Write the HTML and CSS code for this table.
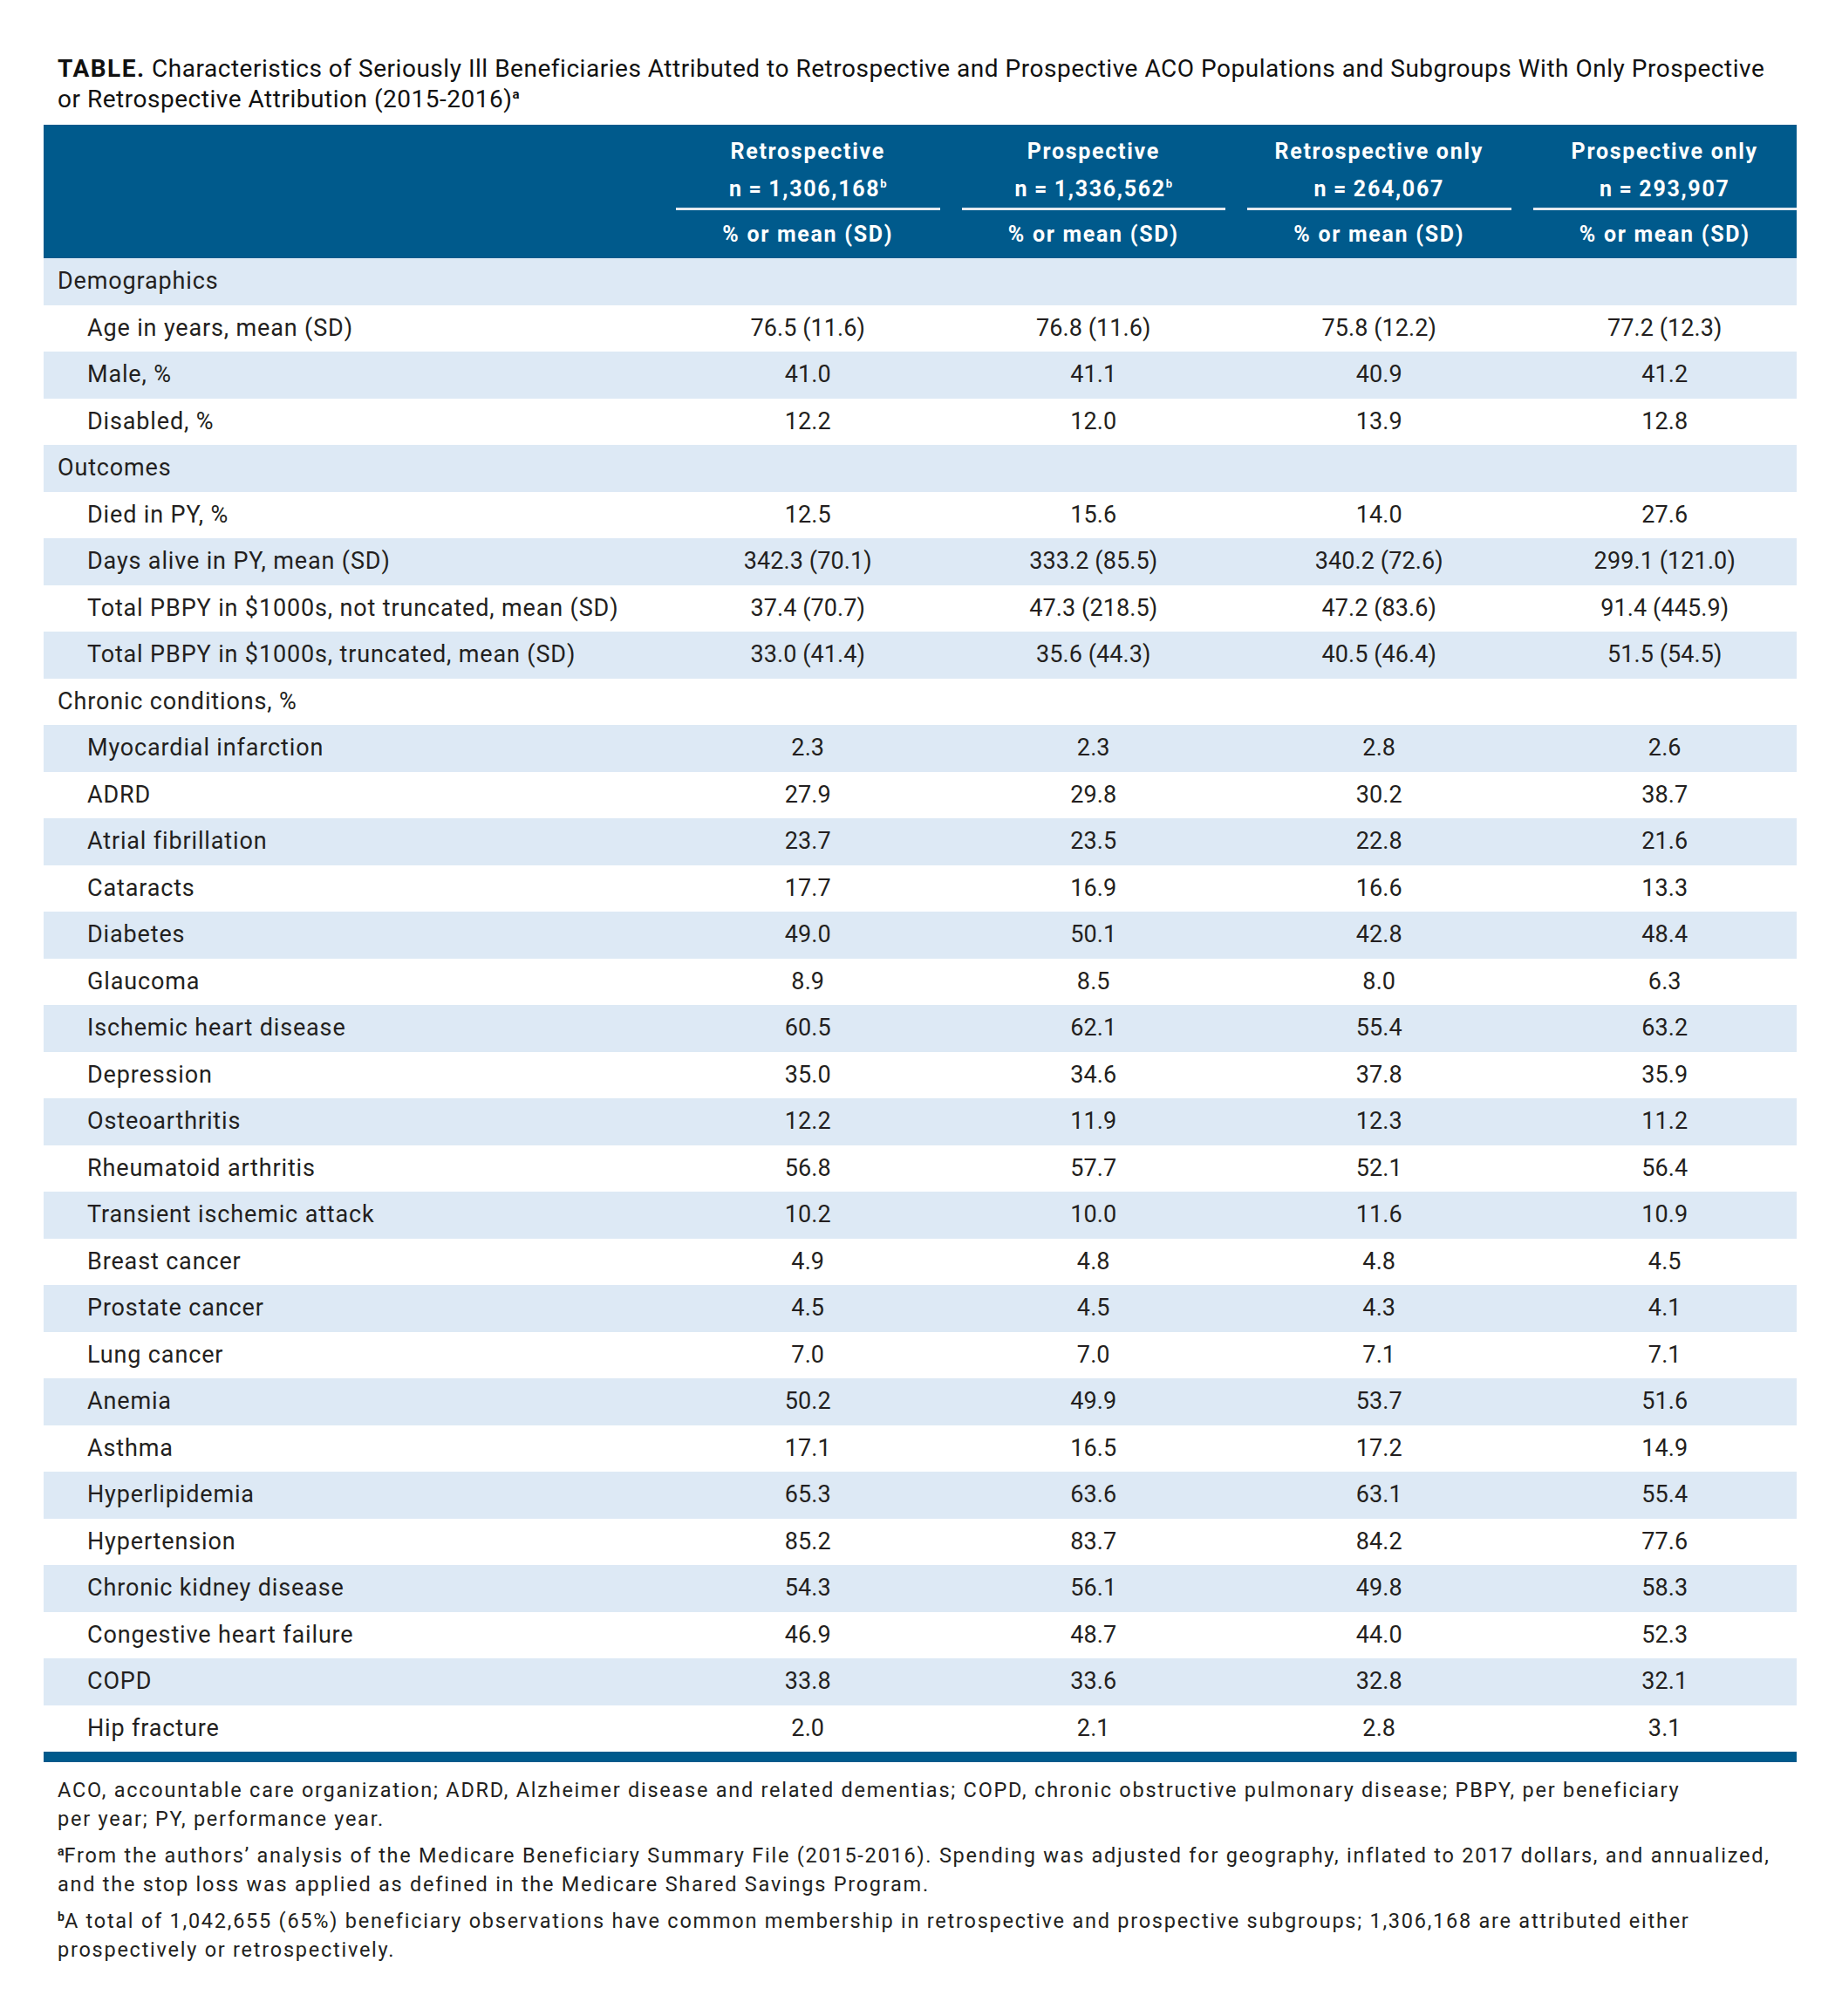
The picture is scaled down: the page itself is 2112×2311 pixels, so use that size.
FILE: index.html
```html
<!DOCTYPE html>
<html lang="en">
<head>
<meta charset="utf-8">
<title>Table</title>
<link rel="stylesheet" href="styles.css">
</head>
<body>
<div class="page">
  <h1 class="title"><b>TABLE.</b> Characteristics of Seriously Ill Beneficiaries Attributed to Retrospective and Prospective ACO Populations and Subgroups With Only Prospective<br>or Retrospective Attribution (2015-2016)<sup>a</sup></h1>
  <table class="data">
    <colgroup>
      <col class="c-label"><col class="c-val"><col class="c-val"><col class="c-val"><col class="c-val">
    </colgroup>
    <thead>
      <tr class="h1">
        <th></th>
        <th><div class="hd">Retrospective<br>n&#8201;=&#8201;1,306,168<sup>b</sup></div></th>
        <th><div class="hd">Prospective<br>n&#8201;=&#8201;1,336,562<sup>b</sup></div></th>
        <th><div class="hd">Retrospective only<br>n&#8201;=&#8201;264,067</div></th>
        <th><div class="hd">Prospective only<br>n&#8201;=&#8201;293,907</div></th>
      </tr>
      <tr class="h2">
        <th></th>
        <th>% or mean (SD)</th>
        <th>% or mean (SD)</th>
        <th>% or mean (SD)</th>
        <th>% or mean (SD)</th>
      </tr>
    </thead>
    <tbody>
      <tr><td class="sec">Demographics</td><td></td><td></td><td></td><td></td></tr>
      <tr><td class="item">Age in years, mean (SD)</td><td class="num">76.5 (11.6)</td><td class="num">76.8 (11.6)</td><td class="num">75.8 (12.2)</td><td class="num">77.2 (12.3)</td></tr>
      <tr><td class="item">Male, %</td><td class="num">41.0</td><td class="num">41.1</td><td class="num">40.9</td><td class="num">41.2</td></tr>
      <tr><td class="item">Disabled, %</td><td class="num">12.2</td><td class="num">12.0</td><td class="num">13.9</td><td class="num">12.8</td></tr>
      <tr><td class="sec">Outcomes</td><td></td><td></td><td></td><td></td></tr>
      <tr><td class="item">Died in PY, %</td><td class="num">12.5</td><td class="num">15.6</td><td class="num">14.0</td><td class="num">27.6</td></tr>
      <tr><td class="item">Days alive in PY, mean (SD)</td><td class="num">342.3 (70.1)</td><td class="num">333.2 (85.5)</td><td class="num">340.2 (72.6)</td><td class="num">299.1 (121.0)</td></tr>
      <tr><td class="item">Total PBPY in $1000s, not truncated, mean (SD)</td><td class="num">37.4 (70.7)</td><td class="num">47.3 (218.5)</td><td class="num">47.2 (83.6)</td><td class="num">91.4 (445.9)</td></tr>
      <tr><td class="item">Total PBPY in $1000s, truncated, mean (SD)</td><td class="num">33.0 (41.4)</td><td class="num">35.6 (44.3)</td><td class="num">40.5 (46.4)</td><td class="num">51.5 (54.5)</td></tr>
      <tr><td class="sec">Chronic conditions, %</td><td></td><td></td><td></td><td></td></tr>
      <tr><td class="item">Myocardial infarction</td><td class="num">2.3</td><td class="num">2.3</td><td class="num">2.8</td><td class="num">2.6</td></tr>
      <tr><td class="item">ADRD</td><td class="num">27.9</td><td class="num">29.8</td><td class="num">30.2</td><td class="num">38.7</td></tr>
      <tr><td class="item">Atrial fibrillation</td><td class="num">23.7</td><td class="num">23.5</td><td class="num">22.8</td><td class="num">21.6</td></tr>
      <tr><td class="item">Cataracts</td><td class="num">17.7</td><td class="num">16.9</td><td class="num">16.6</td><td class="num">13.3</td></tr>
      <tr><td class="item">Diabetes</td><td class="num">49.0</td><td class="num">50.1</td><td class="num">42.8</td><td class="num">48.4</td></tr>
      <tr><td class="item">Glaucoma</td><td class="num">8.9</td><td class="num">8.5</td><td class="num">8.0</td><td class="num">6.3</td></tr>
      <tr><td class="item">Ischemic heart disease</td><td class="num">60.5</td><td class="num">62.1</td><td class="num">55.4</td><td class="num">63.2</td></tr>
      <tr><td class="item">Depression</td><td class="num">35.0</td><td class="num">34.6</td><td class="num">37.8</td><td class="num">35.9</td></tr>
      <tr><td class="item">Osteoarthritis</td><td class="num">12.2</td><td class="num">11.9</td><td class="num">12.3</td><td class="num">11.2</td></tr>
      <tr><td class="item">Rheumatoid arthritis</td><td class="num">56.8</td><td class="num">57.7</td><td class="num">52.1</td><td class="num">56.4</td></tr>
      <tr><td class="item">Transient ischemic attack</td><td class="num">10.2</td><td class="num">10.0</td><td class="num">11.6</td><td class="num">10.9</td></tr>
      <tr><td class="item">Breast cancer</td><td class="num">4.9</td><td class="num">4.8</td><td class="num">4.8</td><td class="num">4.5</td></tr>
      <tr><td class="item">Prostate cancer</td><td class="num">4.5</td><td class="num">4.5</td><td class="num">4.3</td><td class="num">4.1</td></tr>
      <tr><td class="item">Lung cancer</td><td class="num">7.0</td><td class="num">7.0</td><td class="num">7.1</td><td class="num">7.1</td></tr>
      <tr><td class="item">Anemia</td><td class="num">50.2</td><td class="num">49.9</td><td class="num">53.7</td><td class="num">51.6</td></tr>
      <tr><td class="item">Asthma</td><td class="num">17.1</td><td class="num">16.5</td><td class="num">17.2</td><td class="num">14.9</td></tr>
      <tr><td class="item">Hyperlipidemia</td><td class="num">65.3</td><td class="num">63.6</td><td class="num">63.1</td><td class="num">55.4</td></tr>
      <tr><td class="item">Hypertension</td><td class="num">85.2</td><td class="num">83.7</td><td class="num">84.2</td><td class="num">77.6</td></tr>
      <tr><td class="item">Chronic kidney disease</td><td class="num">54.3</td><td class="num">56.1</td><td class="num">49.8</td><td class="num">58.3</td></tr>
      <tr><td class="item">Congestive heart failure</td><td class="num">46.9</td><td class="num">48.7</td><td class="num">44.0</td><td class="num">52.3</td></tr>
      <tr><td class="item">COPD</td><td class="num">33.8</td><td class="num">33.6</td><td class="num">32.8</td><td class="num">32.1</td></tr>
      <tr><td class="item">Hip fracture</td><td class="num">2.0</td><td class="num">2.1</td><td class="num">2.8</td><td class="num">3.1</td></tr>
    </tbody>
  </table>
  <div class="notes">
    <p>ACO, accountable care organization; ADRD, Alzheimer disease and related dementias; COPD, chronic obstructive pulmonary disease; PBPY, per beneficiary<br>per year; PY, performance year.</p>
    <p><sup>a</sup>From the authors’ analysis of the Medicare Beneficiary Summary File (2015-2016). Spending was adjusted for geography, inflated to 2017 dollars, and annualized,<br>and the stop loss was applied as defined in the Medicare Shared Savings Program.</p>
    <p><sup>b</sup>A total of 1,042,655 (65%) beneficiary observations have common membership in retrospective and prospective subgroups; 1,306,168 are attributed either<br>prospectively or retrospectively.</p>
  </div>
</div>
</body>
</html>
```

FILE: styles.css
```css
html, body {
  margin: 0;
  padding: 0;
  background: #ffffff;
}

body {
  color: #231f20;
  font-family: Roboto, "Liberation Sans", sans-serif;
}

.page {
  padding: 61px 0 0 50px;
  width: 2010px;
}

.title {
  margin: 0 0 12px 16px;
  font-size: 28px;
  line-height: 35px;
  font-weight: 400;
  letter-spacing: 0.52px;
  color: #111;
  white-space: nowrap;
}

.title b {
  font-weight: 700;
  letter-spacing: 1.5px;
}

.title sup {
  font-size: 15px;
  font-weight: 700;
  vertical-align: 10px;
  line-height: 0;
}

.data {
  width: 2010px;
  border-collapse: collapse;
  table-layout: fixed;
  border-bottom: 12px solid #005a8c;
}

.c-label {
  width: 700px;
}

.c-val {
  width: 327.5px;
}

.data thead th {
  background: #005a8c;
  color: #ffffff;
  font-weight: 700;
  font-size: 25px;
  letter-spacing: 1.7px;
  text-align: center;
  padding: 0 0 0 25px;
}

.data .h1 th {
  padding-top: 9px;
  vertical-align: top;
}

.data .hd {
  line-height: 43px;
  border-bottom: 3px solid #e3e9f0;
}

.data sup {
  font-size: 13px;
  line-height: 0;
  vertical-align: 10px;
  letter-spacing: 0;
}

.data .h2 th {
  height: 54px;
  line-height: 54px;
  padding-top: 1px;
}

.data tbody td {
  height: 53.5px;
  padding: 0;
  font-size: 27px;
  letter-spacing: 0.85px;
  line-height: 53.5px;
  white-space: nowrap;
}

.data tbody tr:nth-child(odd) {
  background: #dde9f5;
}

.data td.sec {
  padding-left: 16px;
}

.data td.item {
  padding-left: 50px;
}

.data td.num {
  padding-left: 25px;
  text-align: center;
  letter-spacing: 0.1px;
}

.notes {
  margin: 16px 0 0 16px;
  font-size: 23.5px;
  line-height: 33px;
  letter-spacing: 1.75px;
  white-space: nowrap;
}

.notes p {
  margin: 0 0 9px;
}

.notes sup {
  font-size: 14px;
  font-weight: 700;
  line-height: 0;
  vertical-align: 8px;
  letter-spacing: 0;
}
```
